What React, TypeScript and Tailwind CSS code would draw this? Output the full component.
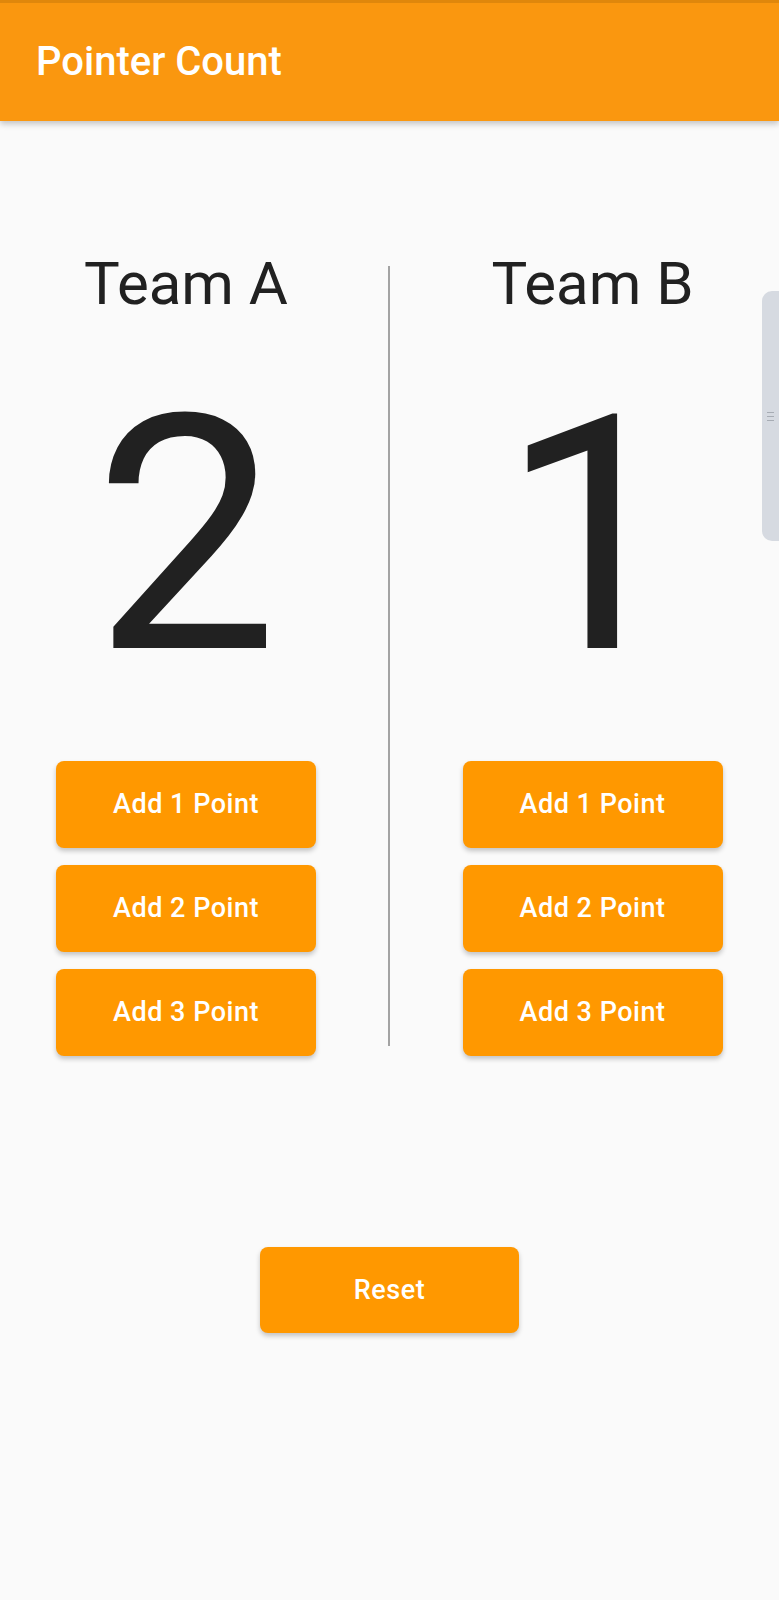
import { useState } from 'react'

const font = { fontFamily: 'Roboto, "Noto Sans", sans-serif' }

function TeamColumn({
  name,
  score,
  onAdd,
}: {
  name: string
  score: number
  onAdd: (n: number) => void
}) {
  return (
    <div className="flex flex-col items-center">
      <h2 className="text-[60px] leading-none font-normal text-[#212121]">{name}</h2>
      <p className="mt-[58px] text-[328px] leading-none font-normal text-[#212121]">{score}</p>
      <div className="mt-[61px] flex flex-col gap-[17px]">
        {[1, 2, 3].map((n) => (
          <button
            key={n}
            onClick={() => onAdd(n)}
            className="h-[87px] w-[260px] rounded-[8px] bg-[#FF9800] text-[27px] font-medium tracking-[0.5px] text-white shadow-[0_3px_5px_rgba(0,0,0,0.22)]"
          >
            Add {n} Point
          </button>
        ))}
      </div>
    </div>
  )
}

export default function App() {
  const [a, setA] = useState(2)
  const [b, setB] = useState(1)

  return (
    <div className="relative min-h-screen bg-[#FAFAFA]" style={font}>
      {/* ── App bar ── */}
      <header className="relative z-10 flex h-[121px] items-center border-t-[3px] border-[#E0870B] bg-[#FA970F] pl-[36px] shadow-[0_3px_6px_rgba(0,0,0,0.22)]">
        <h1 className="text-[40px] font-medium text-white">Pointer Count</h1>
      </header>

      {/* ── Scores ── */}
      <main className="pt-[133px]">
        <div className="grid grid-cols-[372px_34px_373px]">
          <TeamColumn name="Team A" score={a} onAdd={(n) => setA(a + n)} />
          <div className="flex justify-center">
            <div className="mt-[12px] h-[780px] w-[2px] bg-[#A3A3A3]" />
          </div>
          <TeamColumn name="Team B" score={b} onAdd={(n) => setB(b + n)} />
        </div>

        <div className="mt-[191px] flex justify-center">
          <button
            onClick={() => {
              setA(0)
              setB(0)
            }}
            className="h-[86px] w-[259px] rounded-[8px] bg-[#FF9800] text-[27px] font-medium tracking-[0.5px] text-white shadow-[0_3px_5px_rgba(0,0,0,0.22)]"
          >
            Reset
          </button>
        </div>
      </main>

      {/* side handle overlay */}
      <div className="absolute right-0 top-[291px] flex h-[250px] w-[17px] items-center justify-center rounded-l-[10px] bg-[#D6DAE1]">
        <div className="flex flex-col gap-[3px]">
          <div className="h-px w-[7px] bg-[#A7ACB4]" />
          <div className="h-px w-[7px] bg-[#A7ACB4]" />
          <div className="h-px w-[7px] bg-[#A7ACB4]" />
        </div>
      </div>
    </div>
  )
}
